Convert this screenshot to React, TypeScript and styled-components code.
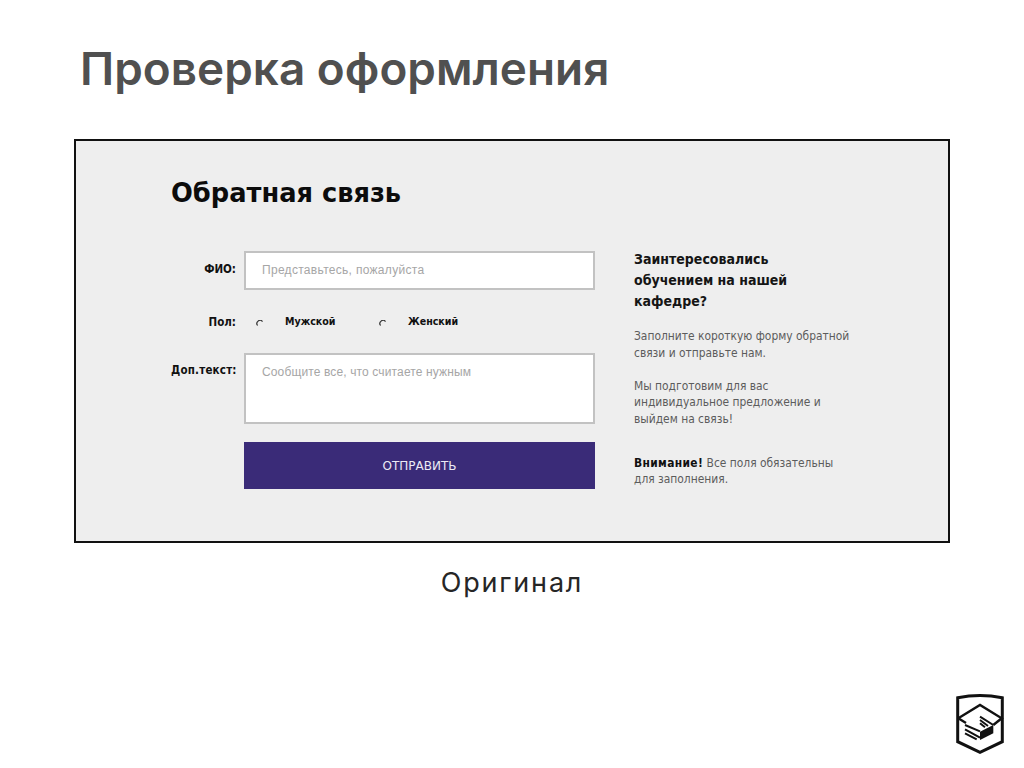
import React from "react";
import styled, { createGlobalStyle } from "styled-components";

const Global = createGlobalStyle`
  html, body { margin: 0; padding: 0; background: #fff; }
  body { width: 1024px; height: 768px; overflow: hidden; font-family: "DejaVu Sans", sans-serif; }
`;

const Slide = styled.main`
  width: 1024px;
  height: 768px;
  display: flex;
  flex-direction: column;
  align-items: flex-start;
  box-sizing: border-box;
  padding: 37px 74px 0;
`;

const Title = styled.h1`
  margin: 0 0 38px 6px;
  font: 600 45.8px/64px "Inter", sans-serif;
  letter-spacing: 0.05px;
  color: #505050;
  white-space: nowrap;
`;

const Frame = styled.section`
  width: 876px;
  height: 404px;
  box-sizing: border-box;
  border: 2px solid #111;
  background: #eee;
  padding: 34px 0 0 95px;
`;

const Heading = styled.h2`
  margin: 0 0 40px;
  font: 700 25.7px/36px "DejaVu Sans", sans-serif;
  color: #0c0c0c;
`;

const Columns = styled.div`
  display: flex;
  gap: 39px;
  align-items: flex-start;
`;

const Form = styled.div`
  width: 424px;
  display: grid;
  grid-template-columns: 65px 351px;
  column-gap: 8px;
  align-content: start;
`;

const Label = styled.div<{ $mt: number; $ls?: number }>`
  font: 700 11.5px/16px "DejaVu Sans Condensed", "DejaVu Sans", sans-serif;
  color: #111;
  text-align: right;
  white-space: nowrap;
  letter-spacing: ${(p) => p.$ls ?? 0}px;
  margin-top: ${(p) => p.$mt}px;
`;

const Field = styled.div<{ $h: number; $ls: number; $mb: number }>`
  height: ${(p) => p.$h}px;
  box-sizing: border-box;
  background: #fff;
  border: 2px solid #c2c2c2;
  padding: 9px 16px 0;
  font: 12px/16px "Liberation Sans", sans-serif;
  color: #a6a6a6;
  letter-spacing: ${(p) => p.$ls}px;
  margin-bottom: ${(p) => p.$mb}px;
`;

const Radios = styled.div`
  display: flex;
  height: 41px;
  box-sizing: border-box;
  padding: 1px 0 0 12px;
`;

const RadioItem = styled.label`
  display: flex;
  align-items: flex-start;
  width: 123px;
  font: 700 10.6px/16px "DejaVu Sans Condensed", "DejaVu Sans", sans-serif;
  color: #111;
`;

const RadioMark = styled.svg`
  width: 8px;
  height: 8px;
  margin: 7px 21px 0 0;
  flex: none;
`;

const Submit = styled.button`
  grid-column: 2;
  height: 47px;
  border: 0;
  padding: 0;
  background: #3a2b78;
  color: #eceaf4;
  font: 400 12px/16px "DejaVu Sans", sans-serif;
`;

const Aside = styled.aside`
  width: 225px;
  margin-top: -2px;
`;

const AsideTitle = styled.h3`
  margin: 0 0 16px;
  font: 700 14px/21px "DejaVu Sans Condensed", "DejaVu Sans", sans-serif;
  color: #151515;
  white-space: pre-line;
`;

const Para = styled.p<{ $mb: number }>`
  margin: 0 0 ${(p) => p.$mb}px;
  font: 400 11.9px/16.5px "DejaVu Sans Condensed", "DejaVu Sans", sans-serif;
  color: #5c5c5c;
  white-space: pre-line;
`;

const Strong = styled.strong`
  color: #111;
  letter-spacing: 0.35px;
`;

const Caption = styled.div`
  width: 876px;
  margin-top: 22px;
  text-align: center;
  font: 400 27px/36px "Inter", sans-serif;
  letter-spacing: 1.8px;
  color: #262626;
`;

const Logo = styled.svg`
  position: absolute;
  left: 956px;
  top: 694px;
  width: 48px;
  height: 60px;
`;

function Radio() {
  return (
    <RadioMark viewBox="0 0 8 8">
      <path d="M6.5 1.6A3 3 0 0 0 1.6 5.5" fill="none" stroke="#333" strokeWidth="1.2" />
    </RadioMark>
  );
}

export default function App() {
  return (
    <Slide>
      <Global />
      <Title>Проверка оформления</Title>
      <Frame>
        <Heading>Обратная связь</Heading>
        <Columns>
          <Form>
            <Label $mt={10}>ФИО:</Label>
            <Field $h={39} $ls={0.3} $mb={22}>Представьтесь, пожалуйста</Field>
            <Label $mt={2}>Пол:</Label>
            <Radios>
              <RadioItem><Radio />Мужской</RadioItem>
              <RadioItem><Radio />Женский</RadioItem>
            </Radios>
            <Label $mt={9} $ls={0.2}>Доп.текст:</Label>
            <Field $h={71} $ls={0.13} $mb={18}>Сообщите все, что считаете нужным</Field>
            <Submit>ОТПРАВИТЬ</Submit>
          </Form>
          <Aside>
            <AsideTitle>{"Заинтересовались\nобучением на нашей\nкафедре?"}</AsideTitle>
            <Para $mb={16.5}>{"Заполните короткую форму обратной\nсвязи и отправьте нам."}</Para>
            <Para $mb={27.5}>{"Мы подготовим для вас\nиндивидуальное предложение и\nвыйдем на связь!"}</Para>
            <Para $mb={0}><Strong>Внимание!</Strong>{" Все поля обязательны\nдля заполнения."}</Para>
          </Aside>
        </Columns>
      </Frame>
      <Caption>Оригинал</Caption>
      <Logo viewBox="0 0 48 60">
        <path d="M1.7 3.7 Q24 -0.5 46.3 3.7 V47.7 L24 58.3 L1.7 47.7 Z" fill="none" stroke="#111" strokeWidth="3" />
        <path d="M2.3 24.3 L24 11 L45.7 24.3 L37.3 31" fill="none" stroke="#111" strokeWidth="2.4" />
        <path d="M2.3 24.3 L10 29" fill="none" stroke="#111" strokeWidth="2.4" />
        <path d="M24 37.7 L37.3 31 V39.3 L24 46 Z" fill="#111" />
        <path d="M24 22.7 L37.3 31 M24 26 L32 32 M24 29.3 L29 33.3 M9 31 L24 37.3 M9 35.3 L24 43.7 M9 39.3 L20.7 45.3" stroke="#111" strokeWidth="2" />
      </Logo>
    </Slide>
  );
}
